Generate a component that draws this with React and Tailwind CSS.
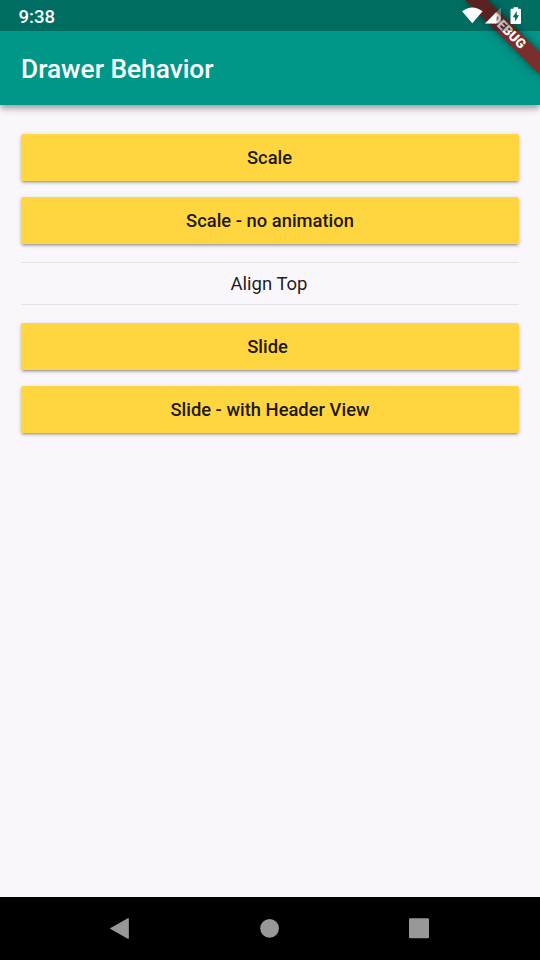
import React from 'react';

function StatusIcons() {
  return (
    <svg className="shrink-0 self-start" width="84" height="31" viewBox="456 0 84 31">
      <path d="M462 11.2 Q472.3 3.6 482.6 11.2 L472.3 23.2 Z" fill="#fff" />
      <path d="M485 23.5 L501 7.5 V23.5 Z" fill="#fff" fillOpacity=".3" />
      <path d="M485 23.5 L496.5 12 V23.5 Z" fill="#fff" />
      <path
        fillRule="evenodd"
        fill="#fff"
        d="M513.5 7.2 H518 V8.8 H520 Q521 8.8 521 9.8 V23 Q521 24 520 24 H511.5 Q510.5 24 510.5 23 V9.8 Q510.5 8.8 511.5 8.8 H513.5 Z M516.8 11 L512.7 17.3 H515.1 V21.6 L519 15.3 H516.8 Z"
      />
    </svg>
  );
}

function DebugBanner() {
  return (
    <div className="absolute top-0 right-0 h-[90px] w-[90px] overflow-hidden">
      <div className="absolute top-[23.6px] left-[6px] flex h-[15.75px] w-[105px] rotate-45 items-center justify-center bg-[#7b2f2d] shadow-[0_0_8px_rgba(0,0,0,0.5)]">
        <span className="pr-px text-[13.4px] leading-none font-black text-white">DEBUG</span>
      </div>
    </div>
  );
}

function Button({ children }) {
  return (
    <button className="flex h-[47px] w-full items-center justify-center rounded-[2.6px] bg-[#ffd640] text-[18.375px] font-medium text-black/90 shadow-[0_3px_2px_-2px_rgba(0,0,0,0.2),0_2px_3px_rgba(0,0,0,0.16),0_1px_5px_rgba(0,0,0,0.12)]">
      {children}
    </button>
  );
}

export default function App() {
  return (
    <div className="flex h-[960px] w-[540px] flex-col overflow-hidden bg-[#f9f7fb] font-[Roboto,sans-serif]">
      <header className="relative z-10 h-[105px] shrink-0 bg-[#009688] text-white shadow-[0_3px_5px_-1px_rgba(0,0,0,0.2),0_5px_6px_rgba(0,0,0,0.14),0_1px_12px_rgba(0,0,0,0.12)]">
        <DebugBanner />
        <div className="relative flex h-[31px] items-center justify-between bg-black/27 pl-[18.5px]">
          <span className="pt-[4px] text-[18.6px] leading-[27px] font-medium">9:38</span>
          <StatusIcons />
        </div>
        <h1 className="flex h-[74px] items-center pt-[4px] pl-[21px] text-[26.25px] font-medium">Drawer Behavior</h1>
      </header>
      <main className="flex flex-1 flex-col px-[21px] pt-[29px]">
        <div className="flex flex-col gap-4">
          <Button>
            <span className="pr-px">Scale</span>
          </Button>
          <Button>Scale - no animation</Button>
        </div>
        <div className="my-[18px] flex h-[43px] items-center justify-center border-y border-[#e5e3e8] pt-[2px] pr-[2px] text-[18.5px] text-black/90">
          Align Top
        </div>
        <div className="flex flex-col gap-4">
          <Button>
            <span className="pr-[5px]">Slide</span>
          </Button>
          <Button>Slide - with Header View</Button>
        </div>
      </main>
      <nav className="h-[63px] shrink-0 bg-black">
        <svg width="540" height="63" viewBox="0 897 540 63" fill="#999799">
          <path d="M128.3 918.5 V938.5 L110.5 928.5 Z" stroke="#999799" strokeLinejoin="round" />
          <circle cx="269.6" cy="928.3" r="9.4" />
          <rect x="409" y="918.3" width="20" height="20" rx="1.3" />
        </svg>
      </nav>
    </div>
  );
}
